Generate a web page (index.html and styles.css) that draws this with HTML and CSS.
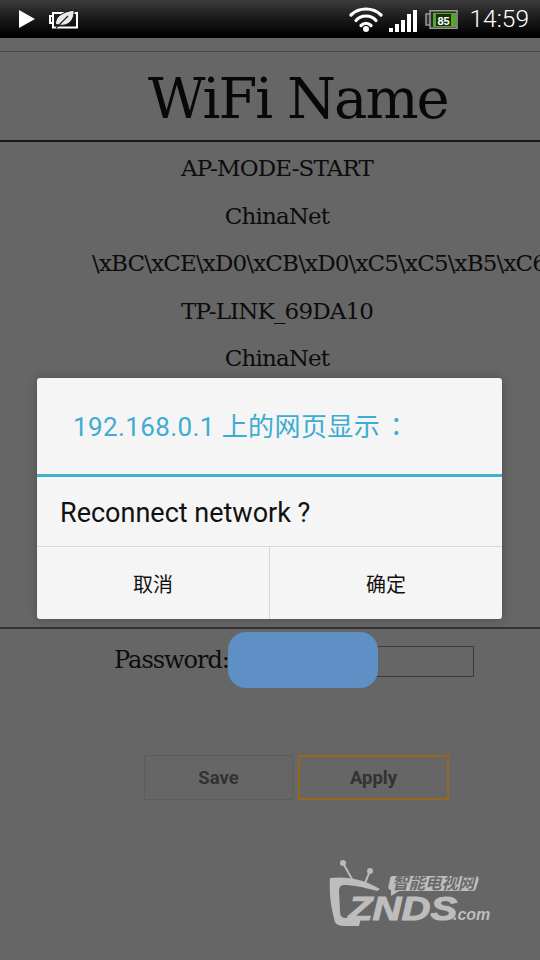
FILE: index.html
```html
<!DOCTYPE html>
<html lang="en">
<head>
<meta charset="utf-8">
<title>WiFi Name</title>
<link rel="stylesheet" href="styles.css">
</head>
<body>
<div class="phone">
  <header class="status">
    <div class="status-left">
      <svg class="ic-play" width="16" height="18" viewBox="0 0 16 18"><path d="M0 0 L16 9 L0 18 Z" fill="#fff"/></svg>
      <svg class="ic-leaf" width="29" height="19" viewBox="0 0 29 19"><path d="M4 6 H1 V13 H4 M4 3 H28 V17.500 H4 Z" fill="none" stroke="#fff" stroke-width="2"/><path d="M6.500 14.500 C6 6 14 2 25 0 C26 9 20 17 10 15 Z" fill="#e8e8e8" stroke="#111" stroke-width="1"/><path d="M7 18 L19 6" stroke="#222" stroke-width="1.200"/></svg>
    </div>
    <div class="status-right">
      <svg class="ic-wifi" width="34" height="26" viewBox="0 0 34 26"><g fill="none" stroke="#fff" stroke-linecap="round" stroke-width="3.200"><path d="M2 9 C10 1 24 1 32 9"/><path d="M7 14.500 C12 8.500 22 8.500 27 14.500"/><path d="M12 19.500 C15 16.500 19 16.500 22 19.500"/></g><circle cx="17" cy="23" r="3" fill="#fff"/></svg>
      <div class="bars"><i class="b1"></i><i class="b2"></i><i class="b3"></i><i class="b4"></i><i class="b5"></i></div>
      <svg class="ic-batt" width="33" height="19" viewBox="0 0 33 19">
        <path d="M5 4 H1 V15 H5" fill="#333" stroke="#9a9a9a" stroke-width="1.500"/>
        <rect x="5" y="0.750" width="27" height="17.500" fill="#2a2a2a" stroke="#9a9a9a" stroke-width="1.500"/>
        <rect x="8" y="3" width="23" height="14" fill="#58a52c"/>
        <rect x="11" y="4" width="15" height="12" fill="#17300c"/>
        <text x="18.500" y="14.500" class="batt-num">85</text>
      </svg>
      <time class="clock">14:59</time>
    </div>
  </header>
  <main class="page">
    <div class="top-line"></div>
    <h1 class="title">WiFi Name</h1>
    <ul class="nets">
      <li>AP-MODE-START</li>
      <li>ChinaNet</li>
      <li class="long">\xBC\xCE\xD0\xCB\xD0\xC5\xC5\xB5\xC6\xBD\xCC\xA8</li>
      <li>TP-LINK_69DA10</li>
      <li>ChinaNet</li>
    </ul>
    <div class="lower">
      <div class="pass-row">
        <label class="pass-label">Password:</label>
        <span class="pass-input"></span>
        <span class="redact"></span>
      </div>
      <div class="btn-row">
        <button class="btn save">Save</button>
        <button class="btn apply">Apply</button>
      </div>
    </div>
  </main>
  <div class="dialog">
    <div class="dlg-title">192.168.0.1 上的网页显示<span class="dlg-colon">：</span></div>
    <div class="dlg-msg">Reconnect network ?</div>
    <div class="dlg-btns"><div class="dlg-btn">取消</div><div class="dlg-btn">确定</div></div>
  </div>
  <div class="mark">
    <svg width="165" height="72" viewBox="0 0 165 72">
      <path d="M16 5 L25 21 M43 13 L38 25" stroke="#b9b9b9" stroke-width="2" fill="none"/>
      <circle cx="16" cy="5" r="3" fill="#b9b9b9"/><circle cx="43" cy="13" r="3" fill="#b9b9b9"/>
      <path class="mark-tv" d="M3 20 C20 18 36 21 53 31 L50 33 C36 29 25 27 17 27 C13 27 12 30 12 34 L13 52 C13 58 14 60 20 60 L34 60 L32 68 C20 68 10 69 8 64 C4 50 2 35 3 20 Z"/>
      <path class="mark-bubble" d="M66 18 H149 C152 18 152 21 151 24 L149 30 C148 33 147 33 144 33 H72 L64 38 L64 32 C61 32 61 29 62 26 L63 21 C63 19 64 18 66 18 Z"/>
      <text x="65" y="31" class="mark-cn">智能电视网</text>
      <text transform="translate(21 62) scale(1.180 1)" class="mark-znds">ZNDS</text>
      <text x="126" y="62" class="mark-com">.com</text>
    </svg>
  </div>
</div>
</body>
</html>
```

FILE: styles.css
```css
* { box-sizing: border-box; }
html, body { margin: 0; padding: 0; }
body { width: 540px; height: 960px; overflow: hidden; background: #666; }
.phone { position: relative; width: 540px; height: 960px; overflow: hidden; background: #666; }
.status { height: 38px; display: flex; justify-content: space-between; align-items: center; padding: 0 11px 0 19px; background: linear-gradient(#3c3c3c, #1c1c1c 45%, #000 95%); }
.status-left { display: flex; align-items: center; gap: 14px; }
.status-right { display: flex; align-items: center; }
.ic-play, .ic-leaf, .ic-wifi, .ic-batt { display: block; }
.ic-wifi { margin-right: 6px; }
.bars { display: flex; align-items: flex-end; gap: 2px; height: 22px; margin: 4px 8px 0 0; }
.bars i { display: block; width: 4px; background: #fff; }
.b1 { height: 4px; } .b2 { height: 8px; } .b3 { height: 12px; } .b4 { height: 18px; } .b5 { height: 22px; }
.batt-num { fill: #fff; font: bold 11px "Liberation Sans", sans-serif; text-anchor: middle; }
.clock { margin-left: 11px; color: #fff; font: 300 24.500px/28px Roboto, sans-serif; }
.page { font-family: "DejaVu Serif", serif; color: #0c0c0c; overflow: hidden; }
.top-line { height: 1px; margin-top: 13px; background: #4a4a4a; }
.title { margin: 0; height: 90px; padding: 16px 0 0 148px; font-size: 56px; line-height: 62px; letter-spacing: -2px; font-weight: normal; border-bottom: 2px solid #1a1a1a; white-space: nowrap; color: #080808; }
.nets { list-style: none; margin: 0; padding: 0; height: 485px; font-size: 23px; letter-spacing: -0.850px; }
.nets li { height: 47.500px; line-height: 52px; text-align: center; padding-left: 14px; white-space: nowrap; }
.nets .long { text-align: left; padding-left: 92px; }
.lower { border-top: 2px solid #333; }
.pass-row { position: relative; display: flex; align-items: center; height: 61px; padding-left: 114px; font-size: 24px; letter-spacing: -1px; }
.pass-label { width: 116px; white-space: nowrap; }
.pass-input { width: 244px; height: 31px; margin-top: 4px; border: 1px solid #3a3a3a; }
.redact { position: absolute; left: 228px; top: 3px; width: 150px; height: 56px; border-radius: 18px; background: #5e90c6; }
.btn-row { display: flex; gap: 5px; padding: 65px 0 0 144px; }
.btn { height: 45px; font: bold 18.500px Roboto, sans-serif; color: #333; background: transparent; padding: 0; border-radius: 1px; }
.save { width: 149px; border: 1px solid #5c5c5c; }
.apply { width: 151px; border: 2px solid #94691f; }
.dialog { position: absolute; left: 37px; top: 378px; width: 465px; height: 241px; background: #f5f5f5; border-radius: 3px; box-shadow: 0 0 10px rgba(0,0,0,.25); }
.dlg-title { height: 99px; padding: 32px 0 0 36px; border-bottom: 3px solid #44afd3; color: #3cacd2; font: 26px/30px Roboto, "Noto Sans CJK SC", sans-serif; letter-spacing: 0.400px; }
.dlg-colon { margin-left: 3px; font-family: "Noto Sans CJK TC", sans-serif; }
.dlg-msg { height: 69px; padding: 20px 0 0 23px; font: 27px/32px Roboto, sans-serif; color: #111; }
.dlg-btns { display: flex; height: 73px; border-top: 1px solid #d8d8d8; }
.dlg-btn { flex: 1; display: flex; align-items: center; justify-content: center; font: 20px "Noto Sans CJK SC", sans-serif; color: #111; }
.dlg-btn + .dlg-btn { border-left: 1px solid #d8d8d8; }
.mark { position: absolute; left: 327px; top: 858px; }
.mark svg { display: block; }
.mark-tv, .mark-bubble { fill: #bdbdbd; }
.mark-cn { font: italic bold 16.500px "Noto Sans CJK SC", sans-serif; fill: #6a6a6a; }
.mark-znds { font: italic bold 34px "Liberation Sans", sans-serif; fill: #bdbdbd; stroke: #bdbdbd; stroke-width: 1px; }
.mark-com { font: italic bold 16px "Liberation Sans", sans-serif; fill: #bdbdbd; }
```
